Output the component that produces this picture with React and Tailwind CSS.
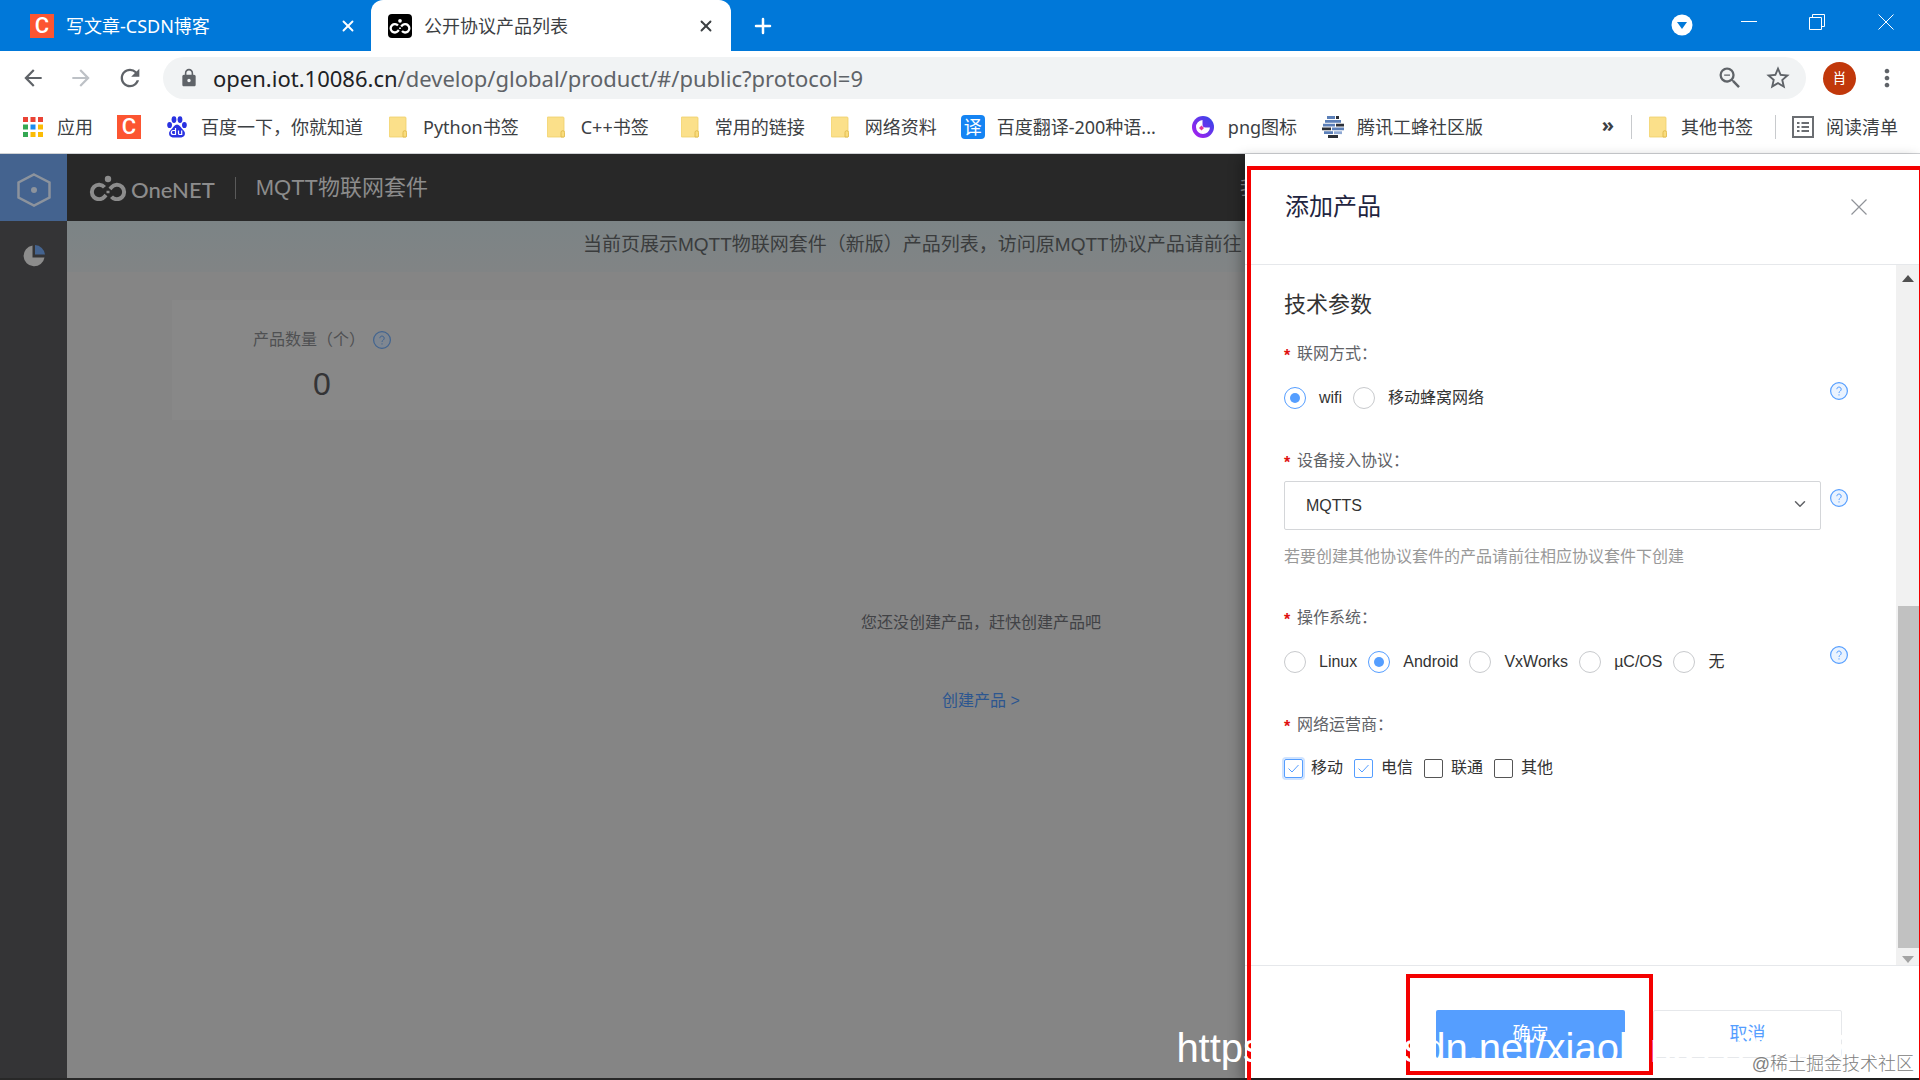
import React, { useState } from 'react';
import { ChevronDown, Plus, X } from 'lucide-react';
import {
  MdArrowBack,
  MdArrowForward,
  MdLock,
  MdMoreVert,
  MdRefresh,
  MdStarBorder,
  MdOutlineZoomOut,
} from 'react-icons/md';

const operatingSystems = ['Linux', 'Android', 'VxWorks', 'µC/OS', '无'];
const carriers = ['移动', '电信', '联通', '其他'];

const CsdnIcon = () => (
  <span className="flex h-6 w-6 shrink-0 items-center justify-center bg-[#fc5531] font-['Roboto',sans-serif] text-[22px] leading-6 font-medium text-white">
    C
  </span>
);

const OneNetMark = ({ className }) => (
  <svg viewBox="0 0 38 26" className={className} fill="none" stroke="currentColor" strokeWidth="4">
    <path d="M15.500 12.300a7.200 7.200 0 1 0 0 9.400l1.500-1.700M22.500 21.700a7.200 7.200 0 1 0 0-9.400L21 14" />
    <path d="M17.500 17h3" strokeWidth="2.500" />
    <circle cx="19" cy="4" r="3.200" fill="currentColor" stroke="none" />
  </svg>
);

const AppsIcon = () => (
  <svg viewBox="0 0 20 20" className="h-5 w-5 shrink-0">
    <path d="M0 0h5v5H0zM7.500 0h5v5h-5zM15 0h5v5h-5z" fill="#ea4335" />
    <path d="M0 7.500h5v5H0zM0 15h5v5H0z" fill="#34a853" />
    <path d="M7.500 7.500h5v5h-5z" fill="#1a8cf0" />
    <path d="M15 7.500h5v5h-5zM7.500 15h5v5h-5zM15 15h5v5h-5z" fill="#fbbc05" />
  </svg>
);

const BaiduIcon = () => (
  <svg viewBox="0 0 20 22" className="h-[22px] w-5 shrink-0">
    <g fill="#2932e1">
      <ellipse cx="2.600" cy="9" rx="2.400" ry="3.100" />
      <ellipse cx="7" cy="3.600" rx="2.400" ry="3.400" />
      <ellipse cx="13" cy="3.600" rx="2.400" ry="3.400" />
      <ellipse cx="17.400" cy="9" rx="2.400" ry="3.100" />
      <path d="M10 8.500c2.300 0 3.500 2.500 5 4.200 1.700 1.700 3.300 3 2.900 5.500-.4 2.600-2.700 3.600-7.900 3.300-5.200.3-7.500-.7-7.900-3.300-.4-2.500 1.200-3.800 2.900-5.500 1.500-1.700 2.700-4.200 5-4.200z" />
    </g>
    <path d="M8.500 12v6.500H6.300a1.700 1.700 0 0 1 0-4h2M11.500 14.500v3a1 1 0 0 0 1 1h2.200v-4" fill="none" stroke="#fff" strokeWidth="1.200" />
  </svg>
);

const FolderIcon = () => (
  <svg viewBox="0 0 18 22" className="h-[22px] w-[18px] shrink-0">
    <path d="M0 2a1 1 0 0 1 1-1h15a1 1 0 0 1 1 1v19H1a1 1 0 0 1-1-1z" fill="#fbe08a" stroke="#efcf6a" strokeWidth=".8" />
    <path d="M14 21v-4.500a1.800 1.800 0 0 1 3.600 0V20a1 1 0 0 1-1 1z" fill="#f9dc7c" stroke="#e0b94c" strokeWidth=".9" />
  </svg>
);

const TranslateIcon = () => (
  <span className="flex h-6 w-6 shrink-0 items-center justify-center rounded-sm bg-[#1584f3] text-lg leading-6 text-white">
    译
  </span>
);

const PngIcon = () => (
  <svg viewBox="0 0 22 22" className="h-[22px] w-[22px] shrink-0">
    <defs>
      <linearGradient id="png" x1="0" y1="1" x2="1" y2="0">
        <stop offset="0" stopColor="#b01cf0" />
        <stop offset="1" stopColor="#2b49e8" />
      </linearGradient>
    </defs>
    <circle cx="11" cy="11" r="11" fill="url(#png)" />
    <path d="M10.500 4a7 7 0 1 0 7.500 7.500h-4.500a3 3 0 0 1-3-3z" fill="#fff" />
    <path d="M9.500 9.500l2.500 2.500-2.500 2.500L7 12z" fill="#e0359a" />
  </svg>
);

const TencentIcon = () => (
  <svg viewBox="0 0 24 22" className="h-[22px] w-6 shrink-0" strokeWidth="2.800">
    <path d="M6 1.500h8M4 5.300h16M2 9.100h12M11 12.900h12M3 16.700h9" stroke="#5b7fb8" />
    <path d="M15 1.500h3M15 9.100h8M1 12.900h9M7 20.500h10" stroke="#2c3038" />
    <path d="M13 16.700h8" stroke="#8fa9d4" />
  </svg>
);

const ReadingListIcon = () => (
  <svg viewBox="0 0 22 22" className="h-[22px] w-[22px] shrink-0" fill="none" stroke="#6b6e72" strokeWidth="2">
    <path d="M1 1h20v20H1zM5 7h2.500M5 11h2.500M5 15h2.500M9.500 7H17M9.500 11H17M9.500 15H17" />
  </svg>
);

const HelpIcon = ({ dim }) => (
  <svg viewBox="0 0 18 18" className={dim ? 'h-[18px] w-[18px] text-[#42648f]' : 'h-[18px] w-[18px] text-[#559eff]'}>
    <circle cx="9" cy="9" r="8.400" fill={dim ? '#7f8791' : '#eaf3ff'} stroke="currentColor" strokeWidth="1.200" />
    <path d="M6.800 7.200a2.200 2.200 0 1 1 3.500 1.800c-.8.600-1.300 1-1.300 1.900M9 12.300v1.200" fill="none" stroke="currentColor" strokeWidth="1" />
  </svg>
);

const Bookmark = ({ icon, label, className = '' }) => (
  <a href="#bookmark" className={`flex shrink-0 items-center whitespace-nowrap ${className}`}>
    {icon}
    {label}
  </a>
);

const FieldLabel = ({ children }) => (
  <legend className="flex h-6 items-center text-[#606266]">
    <span className="mr-[5px] w-2 pt-1 font-bold text-[#e01010]">*</span>
    {children}
  </legend>
);

const HelpButton = () => (
  <button type="button" aria-label="帮助" className="absolute -top-1 right-[-27px]">
    <HelpIcon />
  </button>
);

const RadioGroup = ({ name, options, value, onChange }) => (
  <div className="relative flex h-6 items-center gap-[11px]">
    {options.map((option) => (
      <label key={option} className="flex items-center gap-[13px]">
        <input
          type="radio"
          name={name}
          checked={value === option}
          onChange={() => onChange(option)}
          className="flex h-[22px] w-[22px] appearance-none items-center justify-center rounded-full border border-[#c8cacd] before:h-2.5 before:w-2.5 before:rounded-full checked:border-[#559eff] checked:before:bg-[#559eff]"
        />
        {option}
      </label>
    ))}
    <HelpButton />
  </div>
);

const BrowserChrome = () => (
  <div className="shrink-0 bg-white text-lg text-[#3c4043]">
    <div className="flex h-[51px] bg-[#0078d9] text-white">
      <div className="flex w-[371px] items-center pr-3.5 pl-[30px]">
        <CsdnIcon />
        <span className="ml-3 flex-1">写文章-CSDN博客</span>
        <button type="button" aria-label="关闭标签页">
          <X className="h-[18px] w-[18px]" strokeWidth={2.5} />
        </button>
      </div>
      <div className="flex w-[360px] items-center rounded-t-xl bg-white pr-4 pl-[17px] text-[#3c4043]">
        <span className="flex h-6 w-6 items-center justify-center rounded-sm bg-black text-white">
          <OneNetMark className="h-4 w-[22px]" />
        </span>
        <span className="ml-3 flex-1">公开协议产品列表</span>
        <button type="button" aria-label="关闭标签页">
          <X className="h-[18px] w-[18px]" strokeWidth={2.5} />
        </button>
      </div>
      <button type="button" aria-label="新标签页" className="ml-5">
        <Plus className="h-6 w-6" strokeWidth={2.5} />
      </button>
      <div className="ml-auto flex h-11 items-center">
        <button type="button" aria-label="搜索标签页" className="mt-1.5 mr-12">
          <svg viewBox="0 0 22 22" className="h-[22px] w-[22px]">
            <circle cx="11" cy="11" r="10.500" fill="#fff" />
            <path d="M6 8h10l-5 7z" fill="#0078d9" />
          </svg>
        </button>
        <button type="button" aria-label="最小化" className="mr-[52px]">
          <svg viewBox="0 0 16 16" className="h-4 w-4" stroke="#fff"><path d="M0 7.500h16" /></svg>
        </button>
        <button type="button" aria-label="还原" className="mr-[53px]">
          <svg viewBox="0 0 16 16" className="h-4 w-4" fill="none" stroke="#fff"><path d="M.5 3.500h12v12H.5zM3.500 3.500v-3h12v12h-3" /></svg>
        </button>
        <button type="button" aria-label="关闭" className="mr-[26px]">
          <svg viewBox="0 0 16 16" className="h-4 w-4" stroke="#fff"><path d="M.5.5l15 15M15.500.5l-15 15" /></svg>
        </button>
      </div>
    </div>

    <div className="flex h-[54px] items-center pl-5 text-[#5f6368]">
      <button type="button" aria-label="后退"><MdArrowBack className="h-[26px] w-[26px]" /></button>
      <button type="button" aria-label="前进" className="ml-[22px] text-[#bdc1c6]"><MdArrowForward className="h-[26px] w-[26px]" /></button>
      <button type="button" aria-label="刷新" className="ml-[22px]"><MdRefresh className="h-7 w-7" /></button>
      <div className="ml-[19px] flex h-[42px] flex-1 items-center rounded-full bg-[#f1f3f4] pr-3.5 pl-4">
        <MdLock className="h-5 w-5" />
        <p className="ml-3.5 flex-1 text-[22px] leading-7">
          <span className="text-[#202124]">open.iot.10086.cn</span>/develop/global/product/#/public?protocol=9
        </p>
        <button type="button" aria-label="缩放"><MdOutlineZoomOut className="h-7 w-7" /></button>
        <button type="button" aria-label="收藏" className="ml-5"><MdStarBorder className="h-7 w-7" /></button>
      </div>
      <button type="button" className="ml-[17px] h-[33px] w-[33px] rounded-full bg-[#c1380b] text-sm text-white">肖</button>
      <button type="button" aria-label="更多" className="mr-[19px] ml-[17px]"><MdMoreVert className="h-7 w-7" /></button>
    </div>

    <div className="flex h-[49px] items-center border-b border-[#d0d2d5] pr-[22px] pb-1 pl-[23px]">
      <Bookmark icon={<AppsIcon />} label="应用" className="gap-3.5" />
      <Bookmark icon={<CsdnIcon />} className="ml-6" />
      <Bookmark icon={<BaiduIcon />} label="百度一下，你就知道" className="ml-[26px] gap-3.5" />
      <Bookmark icon={<FolderIcon />} label="Python书签" className="ml-[26px] gap-4" />
      <Bookmark icon={<FolderIcon />} label="C++书签" className="ml-7 gap-4" />
      <Bookmark icon={<FolderIcon />} label="常用的链接" className="ml-8 gap-4" />
      <Bookmark icon={<FolderIcon />} label="网络资料" className="ml-[26px] gap-4" />
      <Bookmark icon={<TranslateIcon />} label="百度翻译-200种语..." className="ml-6 gap-3" />
      <Bookmark icon={<PngIcon />} label="png图标" className="ml-9 gap-3.5" />
      <Bookmark icon={<TencentIcon />} label="腾讯工蜂社区版" className="ml-6 gap-3" />
      <button type="button" className="ml-auto pb-1 text-xl font-bold">»</button>
      <span className="mx-[17px] h-6 w-px bg-[#c8cacd]" />
      <Bookmark icon={<FolderIcon />} label="其他书签" className="gap-3.5" />
      <span className="mr-4 ml-[22px] h-6 w-px bg-[#c8cacd]" />
      <Bookmark icon={<ReadingListIcon />} label="阅读清单" className="gap-3" />
    </div>
  </div>
);

const ProductPage = () => (
  <div className="flex min-h-0 flex-1 bg-[#858585]">
    <nav className="flex w-[67px] shrink-0 flex-col items-center bg-[#343436]">
      <a href="#home" aria-label="首页" className="flex h-[67px] w-full items-center justify-center bg-[#44638f] pt-1">
        <svg viewBox="0 0 34 34" className="h-[34px] w-[34px]" fill="none" stroke="#8c939d" strokeWidth="2.500">
          <path d="M17 1.500l15.500 8v15L17 32.500l-15.500-8v-15z" />
          <circle cx="17" cy="17" r="3" fill="#8c939d" stroke="none" />
        </svg>
      </a>
      <a href="#stats" aria-label="统计" className="mt-6">
        <svg viewBox="0 0 22 22" className="h-[22px] w-[22px]">
          <path d="M9.500 0.500a10.500 10.500 0 1 0 12 12h-12z" fill="#8c8c8c" />
          <path d="M12 0a10.500 10.500 0 0 1 10 9.500H12z" fill="#44638f" />
        </svg>
      </a>
    </nav>
    <div className="min-w-0 flex-1">
      <header className="flex h-[67px] items-center bg-[#282828] pl-[22px] text-[22px] text-[#8c8c8c]">
        <OneNetMark className="h-[26px] w-[38px]" />
        <span className="ml-1 pt-1 font-['Lato',sans-serif] font-medium">OneNET</span>
        <span className="mx-5 h-[22px] w-px bg-[#5a5a5a]" />
        <h1>MQTT物联网套件</h1>
        <a href="#console" className="mr-[590px] ml-auto text-lg">我的控制台</a>
      </header>
      <p className="h-[51px] bg-linear-to-b from-[#7c8486] to-[#818485] pl-[516px] text-[19px] leading-12 whitespace-nowrap text-[#3a3c3d]">
        当前页展示MQTT物联网套件（新版）产品列表，访问原MQTT协议产品请前往
      </p>
      <main className="pt-7 pr-[130px] pl-[105px]">
        <section className="flex h-[120px] bg-[#888] pl-[81px]">
          <div className="flex flex-col items-start pt-7">
            <h2 className="flex items-center gap-2 leading-6 text-[#4f5052]">
              产品数量（个）
              <HelpIcon dim />
            </h2>
            <p className="mt-3.5 ml-[60px] text-[32px] leading-9 text-[#343436]">0</p>
          </div>
        </section>
        <section className="flex flex-col items-center pt-[191px] leading-6">
          <p className="text-[#414245]">您还没创建产品，赶快创建产品吧</p>
          <a href="#create" className="mt-[54px] text-[#2c5690]">创建产品 &gt;</a>
        </section>
      </main>
    </div>
  </div>
);

const AddProductDrawer = () => {
  const [network, setNetwork] = useState('wifi');
  const [system, setSystem] = useState('Android');
  const [selected, setSelected] = useState(['移动', '电信']);

  const toggleCarrier = (name) => {
    setSelected(
      selected.includes(name) ? selected.filter((item) => item !== name) : [...selected, name]
    );
  };

  return (
    <form className="absolute top-0 right-0 bottom-0 flex w-[675px] flex-col bg-white text-[#333] shadow-[-4px_4px_12px_rgba(0,0,0,0.3)]">
      <div className="flex h-[111px] shrink-0 items-start justify-between border-b border-[#e6e8eb] pt-[37px] pr-[53px] pl-10">
        <h2 className="text-2xl text-[#1f2540]">添加产品</h2>
        <button type="button" aria-label="关闭" className="mt-2 text-[#909399]">
          <svg viewBox="0 0 16 16" className="h-4 w-4" stroke="currentColor" strokeWidth="1.200">
            <path d="M.5.5l15 15M15.500.5l-15 15" />
          </svg>
        </button>
      </div>

      <div className="flex min-h-0 flex-1">
        <div className="flex-1 overflow-hidden pt-5 pr-[75px] pl-[39px]">
          <h3 className="text-[22px] leading-10">技术参数</h3>

          <fieldset className="mt-[17px]">
            <FieldLabel>联网方式：</FieldLabel>
            <div className="mt-5">
              <RadioGroup name="network" options={['wifi', '移动蜂窝网络']} value={network} onChange={setNetwork} />
            </div>
          </fieldset>

          <div className="mt-[39px]">
            <label htmlFor="protocol" className="flex h-6 items-center text-[#606266]">
              <span className="mr-[5px] w-2 pt-1 font-bold text-[#e01010]">*</span>
              设备接入协议：
            </label>
            <div className="relative mt-2">
              <select id="protocol" className="h-[49px] w-full appearance-none rounded-xs border border-[#d4d6d9] bg-white px-[21px] text-[#333]">
                <option>MQTTS</option>
              </select>
              <ChevronDown className="pointer-events-none absolute top-3.5 right-3 h-[18px] w-[18px] text-[#606266]" />
              <div className="absolute top-3 right-0">
                <HelpButton />
              </div>
            </div>
            <p className="mt-[15px] leading-6 text-[#999]">若要创建其他协议套件的产品请前往相应协议套件下创建</p>
          </div>

          <fieldset className="mt-[37px]">
            <FieldLabel>操作系统：</FieldLabel>
            <div className="mt-5">
              <RadioGroup name="system" options={operatingSystems} value={system} onChange={setSystem} />
            </div>
          </fieldset>

          <fieldset className="mt-[39px]">
            <FieldLabel>网络运营商：</FieldLabel>
            <div className="mt-[19px] flex h-6 items-center gap-[11px]">
              {carriers.map((name, index) => (
                <label key={name} className="flex items-center gap-2">
                  <span className="grid">
                    <input
                      type="checkbox"
                      checked={selected.includes(name)}
                      onChange={() => toggleCarrier(name)}
                      className={`col-start-1 row-start-1 h-[19px] w-[19px] appearance-none rounded-xs border border-[#555] checked:border-[#559eff] ${index === 0 ? 'ring-2 ring-[#cfe3ff]' : ''}`}
                    />
                    {selected.includes(name) && (
                      <svg viewBox="0 0 19 19" className="pointer-events-none col-start-1 row-start-1 h-[19px] w-[19px]" fill="none" stroke="#559eff">
                        <path d="M4.500 9.500l3.500 3.500 6.500-7" />
                      </svg>
                    )}
                  </span>
                  {name}
                </label>
              ))}
            </div>
          </fieldset>
        </div>
        <div className="flex w-6 shrink-0 flex-col items-center bg-[#f1f1f1] pt-2.5 pb-0.5">
          <svg viewBox="0 0 12 7" className="h-[7px] w-3"><path d="M6 0l6 7H0z" fill="#505050" /></svg>
          <div className="flex-[324]" />
          <div className="w-[21px] flex-[342] bg-[#c1c1c1]" />
          <svg viewBox="0 0 12 7" className="mt-2 h-[7px] w-3"><path d="M6 7L0 0h12z" fill="#a3a3a3" /></svg>
        </div>
      </div>

      <div className="flex h-[113px] shrink-0 items-start border-t border-[#e6e8eb] pt-2 pl-[161px]">
        <div className="h-[101px] border-4 border-[#f40000] pt-8 pr-6 pl-[26px]">
          <button type="submit" className="h-12 w-[189px] rounded-xs bg-[#559eff] text-lg text-white">确定</button>
        </div>
        <button type="button" className="mt-9 h-12 w-[189px] rounded-xs border border-[#e6e8eb] text-lg text-[#559eff]">取消</button>
      </div>

      <div className="pointer-events-none absolute top-3 right-0 -bottom-0.5 left-0.5 border-t-4 border-r border-l-4 border-[#f40000]" />
    </form>
  );
};

export default function App() {
  return (
    <div className="relative flex h-screen flex-col overflow-hidden bg-[#282828] font-['Liberation_Sans','Noto_Sans_CJK_SC',sans-serif]">
      <div className="font-['Noto_Sans','Noto_Sans_CJK_SC',sans-serif]">
        <BrowserChrome />
      </div>
      <div className="relative mb-0.5 flex min-h-0 flex-1">
        <ProductPage />
        <AddProductDrawer />
      </div>
      <p className="pointer-events-none absolute right-1.5 bottom-2 text-[40px] leading-12 whitespace-nowrap text-white">
        https://blog.csdn.net/xiaolong1126626497
      </p>
      <p className="pointer-events-none absolute right-1.5 bottom-0.5 text-lg font-light text-[#808080]">@稀土掘金技术社区</p>
    </div>
  );
}
